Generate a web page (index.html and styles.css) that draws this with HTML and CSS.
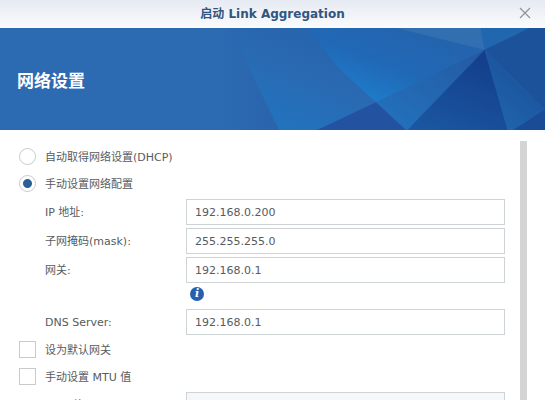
FILE: index.html
```html
<!DOCTYPE html>
<html lang="zh-CN">
<head>
  <meta charset="UTF-8" />
  <meta name="viewport" content="width=device-width, initial-scale=1.0" />
  <title>启动 Link Aggregation</title>
  <link rel="stylesheet" href="styles.css">
</head>
<body>
  <div class="wizard">
    <header class="titlebar">
      <h1>启动 Link Aggregation</h1>
      <button class="close" type="button" aria-label="关闭">
        <svg width="12" height="12" viewBox="0 0 12 12"><path d="M1 1l10 10M11 1l-10 10" stroke="#8f9296" stroke-width="1.2" fill="none"/></svg>
      </button>
    </header>

    <div class="banner">
      <svg class="banner-art" viewBox="0 0 325 102" preserveAspectRatio="xMaxYMid slice" aria-hidden="true">
        <defs>
          <linearGradient id="left" x1="0" y1="0" x2="1" y2="0">
            <stop offset="0" stop-color="#2c6ab1"/>
            <stop offset="1" stop-color="#2a64ab"/>
          </linearGradient>
          <linearGradient id="wing" gradientUnits="userSpaceOnUse" x1="60" y1="102" x2="100" y2="10">
            <stop offset="0" stop-color="#2273be"/>
            <stop offset="0.6" stop-color="#296ab3"/>
            <stop offset="1" stop-color="#2765ae"/>
          </linearGradient>
          <linearGradient id="glow" gradientUnits="userSpaceOnUse" x1="150" y1="75" x2="180" y2="0">
            <stop offset="0" stop-color="#1e7dca"/>
            <stop offset="0.5" stop-color="#2069b7"/>
            <stop offset="1" stop-color="#2464ae"/>
          </linearGradient>
          <linearGradient id="fold" x1="0" y1="1" x2="1" y2="0">
            <stop offset="0" stop-color="#2273bd"/>
            <stop offset="1" stop-color="#2559a3"/>
          </linearGradient>
          <linearGradient id="deep" x1="0" y1="1" x2="0.5" y2="0">
            <stop offset="0" stop-color="#1b58a3"/>
            <stop offset="1" stop-color="#14408b"/>
          </linearGradient>
          <linearGradient id="side" x1="0" y1="1" x2="0.6" y2="0">
            <stop offset="0" stop-color="#2068b0"/>
            <stop offset="1" stop-color="#1a4f98"/>
          </linearGradient>
        </defs>
        <path d="M0 0H12L62 102H0z" fill="url(#left)"/>
        <path d="M11 0H325V102H61z" fill="url(#wing)"/>
        <path d="M90 0H176L265 22L157 74L119 39z" fill="url(#glow)"/>
        <path d="M176 0H261L265 22z" fill="#326fb0"/>
        <path d="M261 0H310L265 22z" fill="#2167b0"/>
        <path d="M310 0H325V81L265 22z" fill="#1b5299"/>
        <path d="M265 22L157 74L188 102z" fill="url(#fold)"/>
        <path d="M157 74L98 102H187z" fill="#2352a0"/>
        <path d="M265 22L188 102H288z" fill="url(#deep)"/>
        <path d="M265 22L325 81L293 102H288z" fill="url(#side)"/>
        <path d="M325 81V102H293z" fill="#194c95"/>
      </svg>
      <h2>网络设置</h2>
    </div>

    <div class="body">
      <form class="settings">
        <label class="option"><input type="radio" name="mode"><span>自动取得网络设置(DHCP)</span></label>
        <label class="option"><input type="radio" name="mode" checked><span>手动设置网络配置</span></label>
        <div class="field">
          <label for="ip">IP 地址:</label>
          <input type="text" id="ip" value="192.168.0.200">
        </div>
        <div class="field">
          <label for="mask">子网掩码(mask):</label>
          <input type="text" id="mask" value="255.255.255.0">
        </div>
        <div class="field">
          <label for="gateway">网关:</label>
          <input type="text" id="gateway" value="192.168.0.1">
        </div>
        <div class="hint">
          <button class="info" type="button">i</button>
        </div>
        <div class="field">
          <label for="dns">DNS Server:</label>
          <input type="text" id="dns" value="192.168.0.1">
        </div>
        <label class="option"><input type="checkbox"><span>设为默认网关</span></label>
        <label class="option"><input type="checkbox"><span>手动设置 MTU 值</span></label>
        <div class="field">
          <label for="mtu">MTU 值:</label>
          <input type="text" id="mtu" disabled>
        </div>
      </form>
      <div class="scrollbar"></div>
    </div>
  </div>
</body>
</html>
```
FILE: styles.css
```css
* {
  box-sizing: border-box;
}
body {
  margin: 0;
  font-family: "DejaVu Sans", "Noto Sans CJK SC", sans-serif;
  font-size: 11px;
  line-height: 16px;
  color: #565b60;
  background: #fff;
}
.wizard {
  display: flex;
  flex-direction: column;
  height: 100vh;
  overflow: hidden;
}
.titlebar {
  display: grid;
  grid-template-columns: 1fr auto 1fr;
  align-items: center;
  flex: none;
  height: 28px;
  padding: 0 14px;
  background: linear-gradient(#e6eaf2, #fafbfc);
}
.titlebar h1 {
  grid-column: 2;
  margin: 0;
  font-size: 12px;
  line-height: 26px;
  color: #2f5680;
}
.close {
  justify-self: end;
  display: flex;
  padding: 0 0 2px;
  border: none;
  background: none;
  cursor: pointer;
}
.banner {
  position: relative;
  display: flex;
  align-items: center;
  flex: none;
  height: 102px;
  padding: 4px 17px 0;
  background: #2c6ab1;
}
.banner-art {
  position: absolute;
  top: 0;
  right: 0;
  width: 60%;
  height: 100%;
}
.banner h2 {
  position: relative;
  margin: 0;
  font-size: 17px;
  line-height: 24px;
  color: #fff;
}
.body {
  display: flex;
  flex: 1;
  min-height: 0;
  gap: 15px;
  padding: 11px 18px 0 19px;
}
.settings {
  flex: 1;
  padding-top: 2px;
}
.scrollbar {
  width: 7px;
  background: #d4d4d4;
}
.option {
  display: flex;
  align-items: center;
  gap: 9px;
  height: 27px;
}
.option span,
.field label {
  padding-top: 2px;
}
.option input {
  appearance: none;
  width: 17px;
  height: 17px;
  margin: 0;
  border: 1px solid #c6cbd0;
  background: #fff;
}
.option input[type="radio"] {
  border-radius: 50%;
}
.option input[type="radio"]:checked {
  background: radial-gradient(circle, #2b5f98 4px, #fff 5px);
}
.field {
  display: grid;
  grid-template-columns: 141px 1fr;
  align-items: center;
  height: 29px;
  padding-left: 26px;
}
.field input {
  width: 100%;
  height: 26px;
  padding: 1px 8px 0;
  border: 1px solid #ced3d6;
  background: #fff;
  font: inherit;
  color: inherit;
}
.field input:disabled {
  background: #f5f7fb;
}
.hint {
  display: flex;
  height: 23px;
  padding: 3px 0 0 171px;
}
.info {
  width: 14px;
  height: 14px;
  padding: 0;
  border: none;
  border-radius: 50%;
  background: #2560ae;
  color: #fff;
  font: italic bold 11px/14px "DejaVu Serif", serif;
}
```
